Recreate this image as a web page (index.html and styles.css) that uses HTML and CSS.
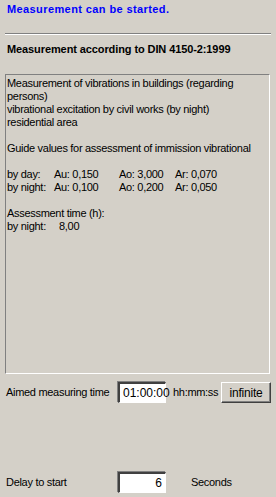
FILE: index.html
```html
<!DOCTYPE html>
<html lang="en">
<head>
    <meta charset="UTF-8">
    <title>Measurement</title>
    <link rel="stylesheet" href="styles.css">
</head>
<body>
    <div class="status">Measurement can be started.</div>
    <div class="rule"></div>
    <div class="title">Measurement according to DIN 4150-2:1999</div>

    <div class="panel">
        <div>Measurement of vibrations in buildings (regarding</div>
        <div>persons)</div>
        <div>vibrational excitation by civil works (by night)</div>
        <div>residential area</div>
        <div class="blank"></div>
        <div>Guide values for assessment of immission vibrational</div>
        <div class="blank"></div>
        <div class="values">
            <span class="c1">by day:</span><span class="c2">Au: 0,150</span><span class="c3">Ao: 3,000</span><span>Ar: 0,070</span>
        </div>
        <div class="values">
            <span class="c1">by night:</span><span class="c2">Au: 0,100</span><span class="c3">Ao: 0,200</span><span>Ar: 0,050</span>
        </div>
        <div class="blank"></div>
        <div>Assessment time (h):</div>
        <div class="values"><span class="c1 wide">by night:</span><span>8,00</span></div>
    </div>

    <div class="row aimed">
        <span class="label">Aimed measuring time</span>
        <span class="field">01:00:00</span>
        <span class="unit">hh:mm:ss</span>
        <button class="btn">infinite</button>
    </div>

    <div class="row delay">
        <span class="label">Delay to start</span>
        <span class="field right">6</span>
        <span class="unit seconds">Seconds</span>
    </div>
</body>
</html>
```

FILE: styles.css
```css
body {
    margin: 0;
    width: 276px;
    height: 497px;
    background-color: #d4d0c8;
    font-family: "Liberation Sans", Arial, sans-serif;
    font-size: 11px;
    line-height: 13px;
    letter-spacing: -0.3px;
    color: #000;
    overflow: hidden;
}

.status {
    padding: 3px 0 0 7px;
    height: 15px;
    font-weight: bold;
    letter-spacing: 0.4px;
    color: #0000ff;
}

.rule {
    margin: 15px 5px 0 5px;
    height: 0;
    border-top: 1px solid #808080;
    border-bottom: 1px solid #ffffff;
}

.title {
    padding: 8px 0 0 7px;
    height: 31px;
    font-weight: bold;
    letter-spacing: -0.1px;
}

.panel {
    margin: 0 6px 0 5px;
    height: 296px;
    padding: 2px 0 0 1px;
    border-top: 1px solid #808080;
    border-left: 1px solid #808080;
    border-right: 1px solid #ffffff;
    border-bottom: 1px solid #ffffff;
}

.blank {
    height: 13px;
}

.values {
    display: flex;
}

.c1 {
    width: 47px;
}

.c1.wide {
    width: 52px;
}

.c2 {
    width: 65px;
}

.c3 {
    width: 56px;
}

.row {
    display: flex;
    align-items: center;
    height: 21px;
}

.aimed {
    margin-top: 8px;
}

.delay {
    margin-top: 69px;
}

.label {
    width: 112px;
    padding-left: 6px;
}

.field {
    box-sizing: border-box;
    width: 48px;
    height: 21px;
    padding: 2px 3px 0 3px;
    background: #fff;
    border-top: 2px solid #404040;
    border-left: 2px solid #404040;
    border-right: 1px solid #ffffff;
    border-bottom: 1px solid #ffffff;
    box-shadow: -1px -1px 0 #808080;
    font-size: 12px;
    line-height: 15px;
    letter-spacing: 0;
}

.field.right {
    text-align: right;
}

.unit {
    margin-left: 7px;
}

.seconds {
    margin-left: 25px;
}

.btn {
    box-sizing: border-box;
    margin: 0 5px 0 auto;
    width: 50px;
    height: 21px;
    padding: 0;
    background: #d4d0c8;
    font-family: inherit;
    font-size: 12px;
    letter-spacing: -0.2px;
    color: #000;
    border-top: 1px solid #ffffff;
    border-left: 1px solid #ffffff;
    border-right: 1px solid #404040;
    border-bottom: 1px solid #404040;
    box-shadow: inset -1px -1px 0 #808080;
}
```
